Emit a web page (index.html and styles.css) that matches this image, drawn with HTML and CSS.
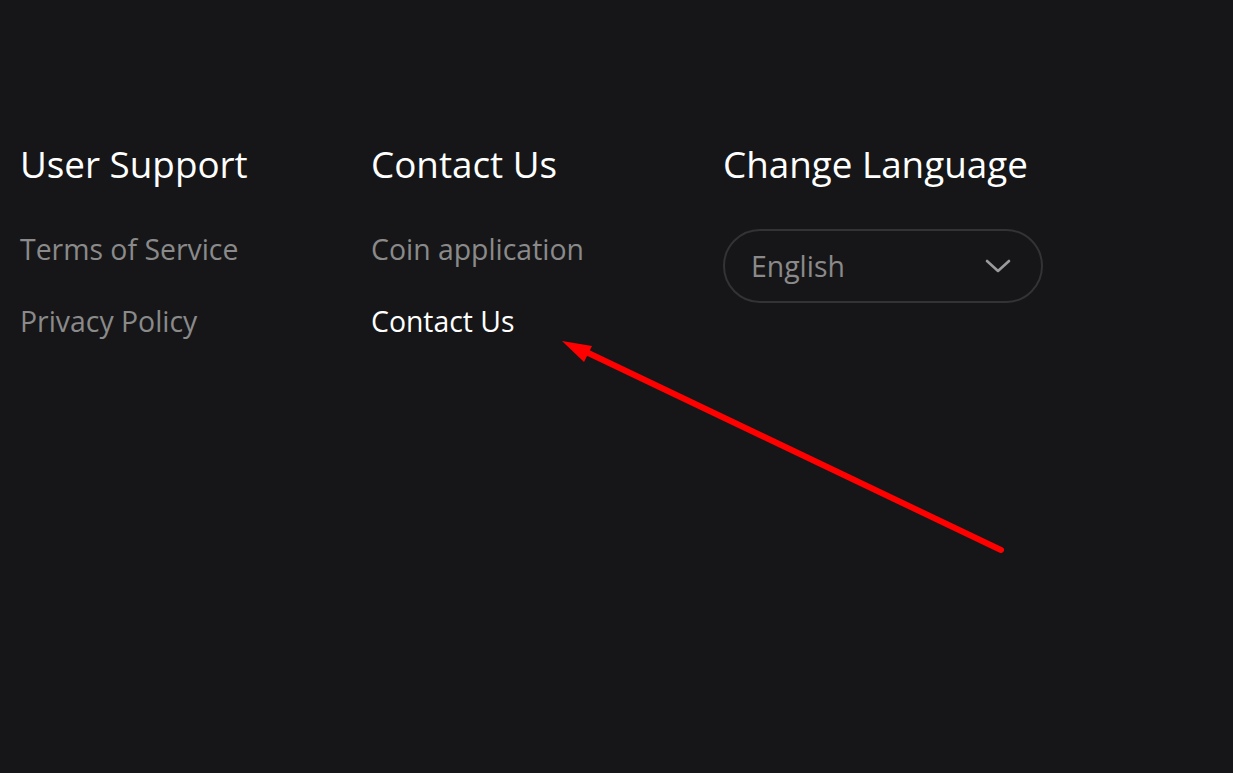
FILE: index.html
```html
<!DOCTYPE html>
<html>
<head>
<meta charset="utf-8">
<link rel="stylesheet" href="styles.css">
</head>
<body>
<footer class="footer">
  <div class="col">
    <h3 class="title">User Support</h3>
    <a class="link">Terms of Service</a>
    <a class="link">Privacy Policy</a>
  </div>
  <div class="col">
    <h3 class="title">Contact Us</h3>
    <a class="link">Coin application</a>
    <a class="link active">Contact Us</a>
  </div>
  <div class="col">
    <h3 class="title">Change Language</h3>
    <div class="select">
      <span class="select-text">English</span>
      <svg class="chev" width="26" height="16" viewBox="0 0 26 16"><path d="M2 3 L13 13 L24 3" fill="none" stroke="#9a9a9a" stroke-width="2.6" stroke-linecap="round" stroke-linejoin="round"/></svg>
    </div>
  </div>
</footer>
<svg class="arrow" width="1233" height="773" viewBox="0 0 1233 773">
  <line x1="1001" y1="550" x2="582" y2="350" stroke="#ff0000" stroke-width="6" stroke-linecap="round"/>
  <polygon points="562,341 592,346 584,362" fill="#ff0000"/>
</svg>
</body>
</html>
```
FILE: styles.css
```css
html, body {
  margin: 0;
  padding: 0;
  background: #161618;
  height: 100%;
}
body {
  font-family: "Open Sans", "Noto Sans", sans-serif;
  position: relative;
  overflow: hidden;
}
.footer {
  display: grid;
  grid-template-columns: 351px 352px 352px;
  padding: 138px 0 0 20px;
}
.col {
  display: flex;
  flex-direction: column;
}
.title {
  margin: 0 0 23px 0;
  font-size: 36.8px;
  font-weight: 400;
  color: #ffffff;
  line-height: 52px;
}
.link {
  font-size: 28.4px;
  color: #8a8a8a;
  line-height: 72px;
  height: 72px;
}
.link.active { color: #ffffff; }
.select {
  height: 70px;
  border: 2px solid #333336;
  border-radius: 40px;
  display: flex;
  align-items: center;
  justify-content: space-between;
  padding: 0 30px 0 26px;
  width: 260px;
  margin-top: 16px;
}
.select-text {
  font-size: 28.4px;
  color: #8a8a8a;
}
.arrow {
  position: absolute;
  left: 0;
  top: 0;
  pointer-events: none;
}
```
